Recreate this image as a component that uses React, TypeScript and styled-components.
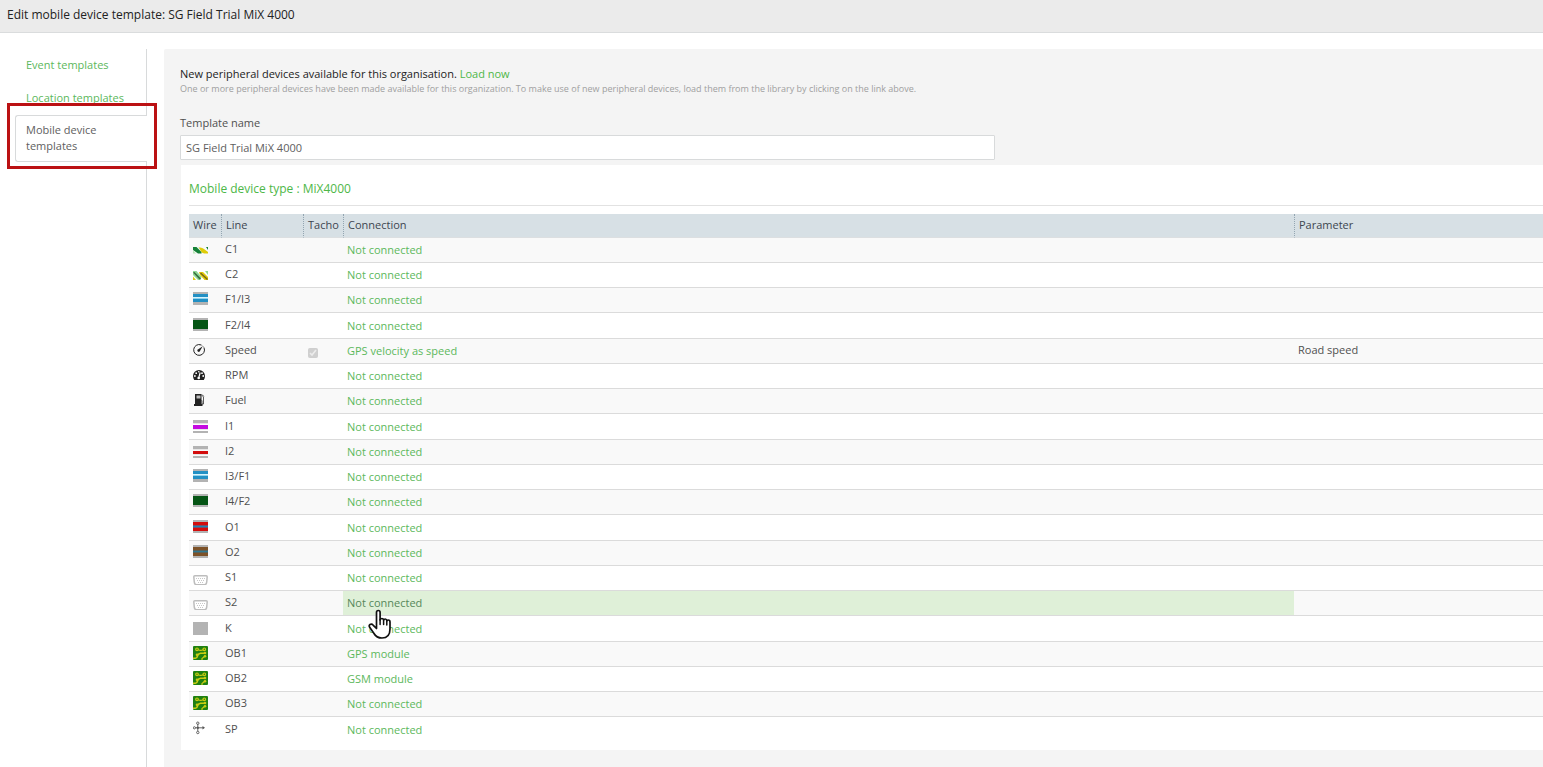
import React from "react";
import styled, { createGlobalStyle, css } from "styled-components";

const GlobalStyle = createGlobalStyle`
  *, *::before, *::after { box-sizing: border-box; }
  html, body, #root { min-height: 100vh; }
  body {
    margin: 0;
    overflow: hidden;
    background: #fff;
    color: #505050;
    font-family: "Open Sans", "Noto Sans", sans-serif;
    font-size: 11px;
    line-height: 16px;
  }
`;

const Page = styled.div`
  display: flex;
  flex-direction: column;
  min-height: 100vh;
`;

const TitleBar = styled.header`
  height: 33px;
  padding: 6px 7px;
  background: #ebebeb;
  border-bottom: 1px solid #dadcdd;
`;

const Title = styled.h1`
  margin: 0;
  color: #222;
  font-size: 12px;
  font-weight: 400;
  line-height: 17px;
`;

const Body = styled.div`
  display: flex;
  flex: 1;
  gap: 17px;
  padding-top: 16px;
`;

const Sidebar = styled.nav`
  display: flex;
  flex-direction: column;
  flex: none;
  width: 147px;
  padding-left: 15px;
  &::after {
    content: "";
    flex: 1;
    border-right: 1px solid #d8dadb;
  }
`;

const tab = css`
  display: block;
  padding: 8px 10px 9px 11px;
  text-decoration: none;
`;

const TabLink = styled.a`
  ${tab}
  height: 33px;
  color: #5cb85c;
  border-right: 1px solid #d8dadb;
`;

const ActiveTab = styled.div`
  position: relative;
  height: 47px;
`;

const ActiveLink = styled.a`
  ${tab}
  height: 47px;
  padding: 6px 40px 7px 10px;
  color: #606060;
  border: 1px solid #d8dadb;
  border-right: 0;
  border-radius: 3px 0 0 3px;
`;

const Highlight = styled.div`
  position: absolute;
  inset: -12px -10px -7px -8px;
  border: 3px solid #bb1113;
  pointer-events: none;
`;

const Main = styled.main`
  flex: 1;
  min-width: 0;
  padding: 17px 0 17px 16px;
  background: #f4f4f4;
  border-top-left-radius: 2px;
`;

const Notice = styled.p`
  margin: 0;
  color: #222;
  font-weight: 500;
`;

const NoticeLink = styled.a`
  color: #4db748;
  text-decoration: none;
`;

const NoticeDetail = styled.p`
  margin: 0 0 19px;
  color: #a0a0a0;
  font-size: 9px;
  line-height: 14px;
`;

const Label = styled.label`
  display: block;
  height: 20px;
`;

const NameInput = styled.input`
  display: block;
  width: 60%;
  max-width: 815px;
  height: 25px;
  padding: 0 5px 1px;
  color: #606060;
  background: #fff;
  border: 1px solid #d8dadb;
  border-radius: 1px;
  font: inherit;
`;

const Panel = styled.section`
  margin-top: 5px;
  margin-left: 1px;
  padding: 15px 0 7px 8px;
  background: #fff;
`;

const PanelTitle = styled.h2`
  margin: 0 0 8px;
  padding-bottom: 8px;
  color: #4db748;
  border-bottom: 1px solid #e2e2e2;
  font-size: 12px;
  font-weight: 500;
  line-height: 17px;
`;

const Table = styled.table`
  width: 100%;
  table-layout: fixed;
  border-collapse: separate;
  border-spacing: 0;
`;

const Col = styled.col<{ $width?: number }>`
  ${(p) => p.$width && `width: ${p.$width}px;`}
`;

const HeadCell = styled.th`
  height: 24px;
  padding: 0 4px 2px;
  color: #3d4650;
  background: #d7e0e5;
  border-bottom: 1px solid #dcdfe1;
  font-weight: 500;
  text-align: left;
  & + & {
    border-left: 1px dotted #93a5b1;
  }
`;

const Row = styled.tr`
  height: 25px;
  &:nth-child(4n) { height: 26px; }
  &:nth-child(odd) { background: #f9f9f9; }
`;

const Cell = styled.td<{ $active?: boolean }>`
  position: relative;
  padding: 0 4px 2px;
  border-bottom: 1px solid #dbdbdb;
  vertical-align: middle;
  ${(p) => p.$active && "background: #dff0d8;"}
  ${Row}:last-child & { border-bottom-color: transparent; }
`;

const ConnectionCell = styled(Cell)`
  padding: 0 4px;
`;

const ConnectionLink = styled.a<{ $active?: boolean }>`
  color: ${(p) => (p.$active ? "#56875a" : "#5cb85c")};
  text-decoration: none;
`;

const Tick = styled.input`
  display: block;
  width: 10px;
  height: 10px;
  margin: 5px 0 0 1px;
`;

const Icon = styled.svg`
  display: block;
  width: 16px;
  height: 16px;
`;

const Pointer = styled.svg`
  position: absolute;
  z-index: 1;
  top: 18px;
  left: 25px;
  width: 24px;
  height: 32px;
  pointer-events: none;
`;

type Band = [color: string, y: number, height: number];

const bands: Record<string, Band[]> = {
  blue: [["#b3b3b3", 1, 13], ["#2290c4", 3, 8], ["#d9f3fb", 6, 1], ["#8ed3ee", 7, 1]],
  green: [["#b3b3b3", 1, 13], ["#055515", 3, 9]],
  purple: [["#b3b3b3", 2, 3], ["#e6e6e6", 5, 1], ["#c40be0", 7, 4], ["#e6e6e6", 11, 1], ["#b3b3b3", 13, 2]],
  red: [["#b3b3b3", 3, 3], ["#e6e6e6", 6, 1], ["#d30d0d", 8, 3], ["#e6e6e6", 11, 1], ["#b3b3b3", 13, 2]],
  redBlue: [["#b3b3b3", 1, 13], ["#d30d0d", 3, 9], ["#74506b", 6, 3], ["#1a83b8", 7, 1]],
  brown: [["#b3b3b3", 1, 13], ["#7d5228", 3, 9], ["#58625a", 6, 3], ["#2d7892", 7, 1]],
  grey: [["#b3b3b3", 2, 13]],
};

function WireIcon({ kind }: { kind: string }) {
  if (bands[kind]) {
    return (
      <Icon viewBox="0 0 16 16" shapeRendering="crispEdges" aria-hidden="true">
        {bands[kind].map(([color, y, height]) => (
          <rect key={color + y} x="0" y={y} width="15" height={height} fill={color} />
        ))}
      </Icon>
    );
  }
  switch (kind) {
    case "twist1":
      return (
        <Icon viewBox="0 0 16 16" aria-hidden="true">
          <path d="M0 6h3.500l5 5v1.500H5L0 9z" fill="#168238" />
          <path d="M0 9.500l3 3H0zM5 6.500h1.500l2 2V10z" fill="#b8e8b4" />
          <path d="M6 6.500q3-.5 5 1.500l4 3v1.500h-3.500q-2 0-3.500-2z" fill="#dfcc08" />
          <path d="M13 6h2v3z" fill="#168238" />
        </Icon>
      );
    case "twist2":
      return (
        <Icon viewBox="0 0 16 16" aria-hidden="true">
          <path d="M0 5h3.500l5 6-1 3H5L0 9z" fill="#8ed894" />
          <path d="M0 6.500L1.500 6l6.500 6.500-1.500 1z" fill="#386b3e" />
          <path d="M0 10.500l3 3.500H0z" fill="#d8ca12" />
          <path d="M6 6h4l5 5v3h-3.500L7 9z" fill="#e0ca08" />
          <path d="M8 6.500l7 6.500-1 1-7-6.500z" fill="#75651a" />
          <path d="M12 5h3v4z" fill="#8ed894" />
        </Icon>
      );
    case "speed":
      return (
        <Icon viewBox="0 0 16 16" fill="none" stroke="#222" aria-hidden="true">
          <path d="M8 2.900A5.400 5.400 0 1 0 11 5.700" strokeWidth="1" />
          <path d="M8 2.900a5.400 5.400 0 0 1 3 2.800" strokeWidth=".6" strokeDasharray="1.500 1" />
          <path d="M9.700 4.300L4.900 7.600a1.300 1.300 0 1 0 1.900 1.700z" fill="#222" stroke="none" />
        </Icon>
      );
    case "rpm":
      return (
        <Icon viewBox="0 0 16 16" aria-hidden="true">
          <path d="M6 3a6 6 0 0 0-6 6c0 1.500.5 2.800 1.200 4h9.600A6.500 6.500 0 0 0 12 9a6 6 0 0 0-6-6z" fill="#222" />
          <path d="M5.800 10.700L7.200 5.500" stroke="#fff" strokeWidth="1.200" />
          <circle cx="5.700" cy="11" r="1.300" fill="#fff" />
          <g fill="#fff">
            <circle cx="1.900" cy="9" r=".9" />
            <circle cx="3.200" cy="6.200" r=".9" />
            <circle cx="5.800" cy="4.700" r=".8" />
            <circle cx="9" cy="6.200" r=".9" />
            <circle cx="10.200" cy="9" r=".9" />
          </g>
        </Icon>
      );
    case "fuel":
      return (
        <Icon viewBox="0 0 16 16" aria-hidden="true">
          <path d="M2 2h6.500v10H9.500v2H1v-2h1z" fill="#222" />
          <path d="M3.500 3.500h4V6.500h-4z" fill="#bbb" />
          <path d="M8.500 8.500H9V12h1.500V5L8.800 3.200M9 2.500l1.800 1.800" fill="none" stroke="#333" strokeWidth=".8" />
        </Icon>
      );
    case "serial":
      return (
        <Icon viewBox="0 0 16 16" aria-hidden="true">
          <path d="M1.800 6.800h11.400q1 0 1 1l-.5 5.400q-.3 2.500-2.200 2.500h-8q-1.900 0-2.200-2.500L.8 7.800q0-1 1-1z" fill="#fff" stroke="#bdbdbd" strokeWidth="1.500" />
          <path d="M3 9.500h9M4 11.500h7M5 13.500h5" stroke="#c8c8c8" strokeDasharray="1 1" />
        </Icon>
      );
    case "board":
      return (
        <Icon viewBox="0 0 16 16" aria-hidden="true">
          <rect x="0" y="1" width="15" height="14" rx="1" fill="#1f8010" />
          <g fill="none" stroke="#c9cc14" strokeWidth="1.200">
            <circle cx="4" cy="4.300" r="1.300" />
            <circle cx="11.300" cy="4.300" r="1.300" />
            <path d="M5.300 4.800q2.400 1.200 4.700 0" />
            <path d="M0 13.300h2.500q1.500 0 2-2.300t3-2.700h4" strokeWidth="1.500" />
            <path d="M9 15v-1.500l2.500-2" />
          </g>
          <circle cx="12" cy="8" r="1.300" fill="#c9cc14" />
          <circle cx="4" cy="9.700" r="1.300" fill="#c9cc14" />
          <circle cx="12" cy="11.300" r="1.300" fill="#c9cc14" />
        </Icon>
      );
    default:
      return (
        <Icon viewBox="0 0 16 16" fill="none" stroke="#555" aria-hidden="true">
          <path d="M2.500 6.800h8M4.800 3v7" strokeWidth=".9" />
          <circle cx="4.800" cy="2.200" r="1.200" strokeWidth=".9" />
          <circle cx="1.400" cy="6.800" r="1.100" strokeWidth=".9" />
          <circle cx="4.800" cy="11.500" r="1.200" strokeWidth=".9" />
          <circle cx="4.800" cy="6.800" r=".8" fill="#555" />
          <path d="M9.500 5l2.500 1.800-2.500 1.800z" fill="#555" stroke="none" />
        </Icon>
      );
  }
}

interface Line {
  wire: string;
  line: string;
  connection?: string;
  tacho?: boolean;
  parameter?: string;
  hovered?: boolean;
}

const lines: Line[] = [
  { wire: "twist1", line: "C1" },
  { wire: "twist2", line: "C2" },
  { wire: "blue", line: "F1/I3" },
  { wire: "green", line: "F2/I4" },
  { wire: "speed", line: "Speed", tacho: true, connection: "GPS velocity as speed", parameter: "Road speed" },
  { wire: "rpm", line: "RPM" },
  { wire: "fuel", line: "Fuel" },
  { wire: "purple", line: "I1" },
  { wire: "red", line: "I2" },
  { wire: "blue", line: "I3/F1" },
  { wire: "green", line: "I4/F2" },
  { wire: "redBlue", line: "O1" },
  { wire: "brown", line: "O2" },
  { wire: "serial", line: "S1" },
  { wire: "serial", line: "S2", hovered: true },
  { wire: "grey", line: "K" },
  { wire: "board", line: "OB1", connection: "GPS module" },
  { wire: "board", line: "OB2", connection: "GSM module" },
  { wire: "board", line: "OB3" },
  { wire: "network", line: "SP" },
];

function HandPointer() {
  return (
    <Pointer viewBox="0 0 24 32" aria-hidden="true">
      <path
        d="M8.500 3.500q0-2 1.800-2t1.800 2v7.500q.3-1.500 1.800-1.500t1.700 1.500q.3-1 1.600-1 1.500 0 1.600 1.800.4-.8 1.500-.8 1.700 0 1.700 2v7q0 9-8 9-5.500 0-8-4.500L1.500 18q-.8-1.700.5-2.500 1.700-1 3.300.8l3.200 3.200z"
        fill="#fff"
        stroke="#111"
        strokeWidth="1.700"
        strokeLinejoin="round"
      />
      <path d="M12.100 10.500v5M15.600 11v4.500M18.800 12v4" stroke="#111" strokeWidth="1.500" strokeLinecap="round" />
    </Pointer>
  );
}

export default function App() {
  return (
    <Page>
      <GlobalStyle />
      <TitleBar>
        <Title>Edit mobile device template: SG Field Trial MiX 4000</Title>
      </TitleBar>
      <Body>
        <Sidebar aria-label="Templates">
          <TabLink href="#events">Event templates</TabLink>
          <TabLink href="#locations">Location templates</TabLink>
          <ActiveTab>
            <ActiveLink href="#devices" aria-current="page">Mobile device templates</ActiveLink>
            <Highlight />
          </ActiveTab>
        </Sidebar>
        <Main>
          <Notice>
            New peripheral devices available for this organisation. <NoticeLink href="#load">Load now</NoticeLink>
          </Notice>
          <NoticeDetail>
            One or more peripheral devices have been made available for this organization. To make use of new
            peripheral devices, load them from the library by clicking on the link above.
          </NoticeDetail>
          <Label htmlFor="template-name">Template name</Label>
          <NameInput id="template-name" type="text" defaultValue="SG Field Trial MiX 4000" />
          <Panel>
            <PanelTitle>Mobile device type : MiX4000</PanelTitle>
            <Table>
              <colgroup>
                <Col $width={32} />
                <Col $width={82} />
                <Col $width={40} />
                <Col />
                <Col $width={249} />
              </colgroup>
              <thead>
                <tr>
                  <HeadCell scope="col">Wire</HeadCell>
                  <HeadCell scope="col">Line</HeadCell>
                  <HeadCell scope="col">Tacho</HeadCell>
                  <HeadCell scope="col">Connection</HeadCell>
                  <HeadCell scope="col">Parameter</HeadCell>
                </tr>
              </thead>
              <tbody>
                {lines.map((l) => (
                  <Row key={l.line}>
                    <Cell><WireIcon kind={l.wire} /></Cell>
                    <Cell>{l.line}</Cell>
                    <Cell>
                      {l.tacho && <Tick type="checkbox" aria-label={`${l.line} tacho`} defaultChecked disabled />}
                    </Cell>
                    <ConnectionCell $active={l.hovered}>
                      <ConnectionLink href={`#${l.line}`} $active={l.hovered}>
                        {l.connection ?? "Not connected"}
                      </ConnectionLink>
                      {l.hovered && <HandPointer />}
                    </ConnectionCell>
                    <Cell>{l.parameter}</Cell>
                  </Row>
                ))}
              </tbody>
            </Table>
          </Panel>
        </Main>
      </Body>
    </Page>
  );
}
